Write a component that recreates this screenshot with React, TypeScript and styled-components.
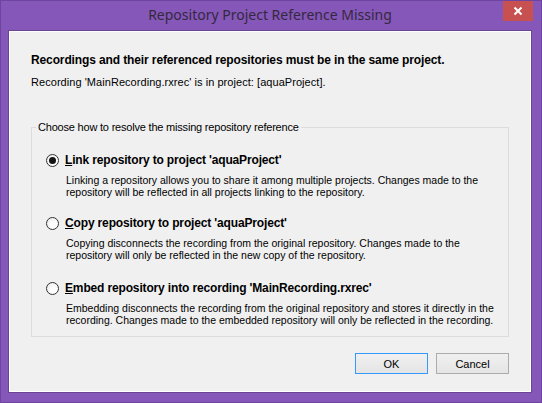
import React from "react";
import styled, { createGlobalStyle } from "styled-components";

const Global = createGlobalStyle`
  html, body { margin: 0; padding: 0; background: #8557b8; }
  * { box-sizing: border-box; }
`;

const Window = styled.div`
  width: 542px;
  height: 403px;
  background: #8557b8;
  border: 1px solid #6d45a0;
  display: flex;
  flex-direction: column;
  padding: 0 9px 9px 7px;
  font-family: "Liberation Sans", Arial, sans-serif;
`;

const TitleBar = styled.div`
  height: 29px;
  position: relative;
  display: flex;
  align-items: center;
  justify-content: center;
`;

const Title = styled.div`
  font-family: "Noto Sans", "Open Sans", sans-serif;
  font-size: 14px;
  color: #34283f;
  padding-bottom: 2px;
`;

const CloseButton = styled.div`
  position: absolute;
  right: -1px;
  top: 0;
  width: 30px;
  height: 20px;
  background: #c75050;
  display: flex;
  align-items: center;
  justify-content: center;
`;

const Client = styled.div`
  flex: 1;
  border: 1px solid #6b4496;
  background: #f0f0f0;
  box-shadow: inset 1px 1px 0 #ffffff, inset -1px -1px 0 #ffffff;
  display: flex;
  flex-direction: column;
  padding: 21px 22px 0 22px;
`;

const Heading = styled.div`
  font-weight: bold;
  font-size: 12px;
  line-height: 16px;
  letter-spacing: -0.12px;
  color: #000;
`;

const Info = styled.div`
  font-size: 11px;
  line-height: 14px;
  letter-spacing: 0.05px;
  color: #000;
  margin-top: 7px;
`;

const Group = styled.fieldset`
  margin: 32px 0 0 0;
  border: 1px solid #dcdcdc;
  padding: 19px 0 10px 14px;
  min-inline-size: 0;
`;

const Legend = styled.legend`
  font-size: 11px;
  line-height: 13px;
  letter-spacing: -0.2px;
  padding: 0 2px;
  margin-left: -10px;
  color: #000;
`;

const Option = styled.div<{ $gap: number }>`
  display: grid;
  grid-template-columns: 19px 1fr;
  margin-bottom: ${(p) => p.$gap}px;
`;

const Radio = styled.span<{ $checked?: boolean }>`
  width: 13px;
  height: 13px;
  border-radius: 50%;
  border: 1px solid #333333;
  background: radial-gradient(circle at 65% 65%, #ffffff 30%, #e4e4e4 100%);
  margin-top: 1px;
  display: flex;
  align-items: center;
  justify-content: center;
  &::after {
    content: "";
    display: ${(p) => (p.$checked ? "block" : "none")};
    width: 7px;
    height: 7px;
    border-radius: 50%;
    background: #141414;
  }
`;

const OptionLabel = styled.div`
  font-weight: bold;
  font-size: 12px;
  color: #000;
  line-height: 15px;
  letter-spacing: -0.15px;
`;

const Key = styled.span`
  text-decoration: underline;
`;

const Desc = styled.div`
  grid-column: 2;
  font-size: 10.5px;
  line-height: 12px;
  color: #000;
  margin-top: 6px;
  padding-left: 1px;
`;

const Footer = styled.div`
  display: flex;
  justify-content: flex-end;
  gap: 8px;
  margin-top: 16px;
`;

const Button = styled.button<{ $default?: boolean }>`
  width: 73px;
  height: 21px;
  font-family: "Liberation Sans", Arial, sans-serif;
  font-size: 11px;
  color: #000;
  border: 1px solid ${(p) => (p.$default ? "#3399ff" : "#acacac")};
  background: linear-gradient(#f0f0f0, #e5e5e5);
  padding: 0;
`;

export default function App() {
  return (
    <>
      <Global />
      <Window>
        <TitleBar>
          <Title>Repository Project Reference Missing</Title>
          <CloseButton>
            <svg width="10" height="10" viewBox="0 0 10 10">
              <path d="M1.5 1.5 L8.5 8.5 M8.5 1.5 L1.5 8.5" stroke="#fff" strokeWidth="2" />
            </svg>
          </CloseButton>
        </TitleBar>
        <Client>
          <Heading>Recordings and their referenced repositories must be in the same project.</Heading>
          <Info>Recording 'MainRecording.rxrec' is in project: [aquaProject].</Info>
          <Group>
            <Legend>Choose how to resolve the missing repository reference</Legend>
            <Option $gap={18}>
              <Radio $checked />
              <OptionLabel><Key>L</Key>ink repository to project 'aquaProject'</OptionLabel>
              <Desc>
                Linking a repository allows you to share it among multiple projects. Changes made to the
                <br />
                repository will be reflected in all projects linking to the repository.
              </Desc>
            </Option>
            <Option $gap={20}>
              <Radio />
              <OptionLabel><Key>C</Key>opy repository to project 'aquaProject'</OptionLabel>
              <Desc>
                Copying disconnects the recording from the original repository. Changes made to the
                <br />
                repository will only be reflected in the new copy of the repository.
              </Desc>
            </Option>
            <Option $gap={0}>
              <Radio />
              <OptionLabel><Key>E</Key>mbed repository into recording 'MainRecording.rxrec'</OptionLabel>
              <Desc>
                Embedding disconnects the recording from the original repository and stores it directly in the
                <br />
                recording. Changes made to the embedded repository will only be reflected in the recording.
              </Desc>
            </Option>
          </Group>
          <Footer>
            <Button $default>OK</Button>
            <Button>Cancel</Button>
          </Footer>
        </Client>
      </Window>
    </>
  );
}
